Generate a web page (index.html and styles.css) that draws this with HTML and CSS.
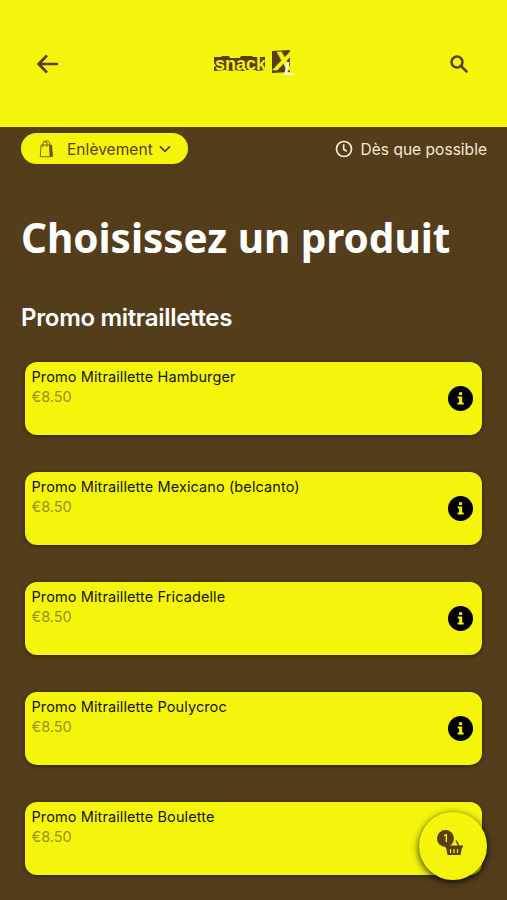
FILE: index.html
```
<!DOCTYPE html>
<html lang="fr">
<head>
<meta charset="utf-8">
<title>Snack XL</title>
<link rel="stylesheet" href="styles.css">
</head>
<body>
<svg class="defs" width="0" height="0" aria-hidden="true">
  <symbol id="info" viewBox="0 0 24 24"><circle cx="12" cy="12" r="12"/><path fill="#f4f50b" d="M10.700 6h2.800v2.700h-2.800zM9.300 10.100h4.300v5.700h1.400v1.900H9.200v-1.900h1.500V12H9.300z"/></symbol>
</svg>
<header class="topbar">
  <svg class="back" viewBox="0 0 22 20"><path d="M21 10H2M10 1.500 1.700 10l8.300 8.500"/></svg>
  <svg class="logo" viewBox="0 0 84 28">
    <path fill="#573e13" d="M1 7h7l1-1h7l1 2h10l1-2h11l1 1h12v13l-8 1-2-1H32l-1 1-10-1-1 1-8-1-11 1v-4l2-1-2-3z"/>
    <text x="2" y="20" class="logo-word" textLength="51" lengthAdjust="spacingAndGlyphs">snack</text>
    <path fill="#573e13" d="M59 1l18-1v22l-18 1z"/>
    <text x="61" y="20" class="logo-x" textLength="19" lengthAdjust="spacingAndGlyphs">X</text>
    <text x="71" y="25" class="logo-l" textLength="11" lengthAdjust="spacingAndGlyphs">L</text>
  </svg>
  <svg class="search" viewBox="0 0 18 18"><circle cx="7" cy="7" r="5.500"/><path d="m11 11 5.500 5.500"/></svg>
</header>
<div class="options">
  <button class="mode">
    <svg class="bag" viewBox="0 0 15 18"><path class="line" d="M2 5h8.700l.4 11.700H1.300zM4 7V3.500Q4 1 6 1t2 2.500V7M6 3Q6.500.8 8.200.8T10.500 3v2"/><path class="side" d="M10.700 4.500 13 5l1 11.500-3 .7z"/></svg>
    <span class="label">Enlèvement</span>
    <svg class="chevron" viewBox="0 0 12 8"><path d="m1 1.300 5 5 5-5"/></svg>
  </button>
  <div class="time">
    <svg class="clock" viewBox="0 0 18 18"><circle cx="9" cy="9" r="7.500"/><path d="M8.700 4.200v5l3 2"/></svg>
    <span>Dès que possible</span>
  </div>
</div>
<main>
  <h1>Choisissez un produit</h1>
  <h2>Promo mitraillettes</h2>
  <ul class="products">
    <li><div><h3>Promo Mitraillette Hamburger</h3><p>€8.50</p></div><svg class="info"><use href="#info"/></svg></li>
    <li><div><h3>Promo Mitraillette Mexicano (belcanto)</h3><p>€8.50</p></div><svg class="info"><use href="#info"/></svg></li>
    <li><div><h3>Promo Mitraillette Fricadelle</h3><p>€8.50</p></div><svg class="info"><use href="#info"/></svg></li>
    <li><div><h3>Promo Mitraillette Poulycroc</h3><p>€8.50</p></div><svg class="info"><use href="#info"/></svg></li>
    <li><div><h3>Promo Mitraillette Boulette</h3><p>€8.50</p></div></li>
  </ul>
</main>
<button class="cart">
  <svg class="basket" viewBox="0 0 18 18"><path d="M4 8 7 2.500M14 8l-3-5.500" fill="none" stroke="#573e13" stroke-width="1.500"/><path fill="#573e13" d="M0 7.500h18v2h-1L15.500 17h-13L1 9.500H0z"/><path d="M5.500 11v4M9 11v4M12.500 11v4" stroke="#f4f50b" stroke-width="1.200"/></svg>
  <span class="badge">1</span>
</button>
</body>
</html>
```
FILE: styles.css
```
* { box-sizing: border-box; }
body {
  margin: 0;
  height: 900px;
  overflow: hidden;
  background: #533d1a;
  color: #fff;
  font-family: Inter, "Liberation Sans", sans-serif;
}
svg { display: block; flex: none; }
.defs { position: absolute; }
h1, h2, h3, p, ul { margin: 0; padding: 0; }
button { border: 0; font: inherit; color: #573e13; background: #f4f50b; }
.topbar {
  height: 127px;
  padding: 0 39px 0 37px;
  display: flex;
  align-items: center;
  justify-content: space-between;
  background: #f4f50b;
}
.back { width: 22px; height: 20px; fill: none; stroke: #573e13; stroke-width: 2.700; }
.logo { width: 84px; height: 28px; overflow: visible; }
.logo-word { font: bold 19px "Liberation Sans", sans-serif; fill: #f4f50b; }
.logo-x { font: italic bold 26px "Liberation Sans", sans-serif; fill: #f4f50b; stroke: #f4f50b; stroke-width: .5; }
.logo-l { font: italic bold 18px "Liberation Sans", sans-serif; fill: #fffde5; }
.search { width: 18px; height: 18px; fill: none; stroke: #573e13; stroke-width: 2.500; stroke-linecap: round; }
.options {
  height: 44px;
  padding: 6px 20px 0 21px;
  display: flex;
  align-items: flex-start;
  justify-content: space-between;
}
.mode {
  width: 167px;
  height: 31px;
  padding: 0 17px 0 18px;
  display: flex;
  align-items: center;
  border-radius: 16px;
  font-size: 15.500px;
  letter-spacing: .05px;
}
.label { padding-top: 2px; }
.bag { width: 15px; height: 18px; margin-right: 13px; }
.line { fill: none; stroke: #77681a; stroke-width: 1; }
.side { fill: #665314; }
.chevron { width: 12px; height: 8px; margin-left: 6px; fill: none; stroke: #573e13; stroke-width: 1.700; }
.time { height: 32px; display: flex; align-items: center; gap: 8px; font-size: 15.500px; letter-spacing: .03px; color: #f7e9d8; }
.clock { width: 18px; height: 18px; fill: none; stroke: #f7e9d8; stroke-width: 1.700; }
main { padding: 0 25px; }
h1 {
  margin: 39px -4px 0;
  font: bold 40.500px/56px "Noto Sans", sans-serif;
  letter-spacing: -.04px;
  white-space: nowrap;
}
h2 { margin: 37px -4px 0; font-size: 24px; line-height: 30px; font-weight: 600; letter-spacing: -.32px; }
.products { margin-top: 29px; list-style: none; display: grid; gap: 37px; }
.products li {
  height: 73px;
  padding: 5px 9px 0 6.500px;
  display: flex;
  justify-content: space-between;
  border-radius: 12px;
  background: #f4f50b;
  box-shadow: 0 1px 4px rgba(0, 0, 0, .45);
}
h3 { font-size: 14.500px; line-height: 20px; font-weight: 400; letter-spacing: .1px; color: #171400; }
.products p { font-size: 14.500px; line-height: 20px; color: #95920e; }
.info { width: 25px; height: 25px; margin-top: 19px; }
.cart {
  position: fixed;
  left: 419px;
  top: 812px;
  width: 68px;
  height: 68px;
  border-radius: 50%;
  box-shadow: 0 2px 7px rgba(0, 0, 0, .85);
}
.basket { position: absolute; left: 26px; top: 26px; width: 18px; height: 18px; }
.badge {
  position: absolute;
  left: 18px;
  top: 18px;
  width: 17px;
  height: 17px;
  border-radius: 50%;
  background: #573e13;
  color: #f4f50b;
  font-size: 10px;
  line-height: 17px;
  font-weight: 600;
  text-align: center;
}
```
